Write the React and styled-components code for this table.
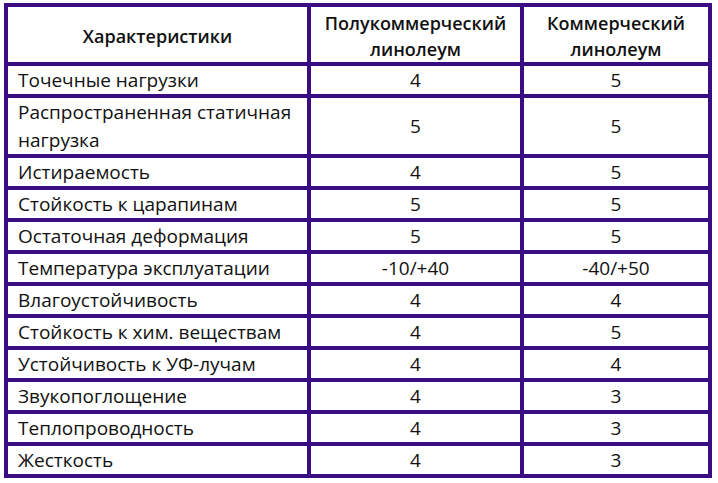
import React from 'react'
import styled, { createGlobalStyle } from 'styled-components'

const GlobalStyle = createGlobalStyle`
  html, body { margin: 0; padding: 0; background: #fff; }
  body { font-family: "Open Sans", "Liberation Sans", sans-serif; color: #111; }
`

const Page = styled.div`
  padding: 3px 6px 6px 4px;
`

const Grid = styled.div`
  display: grid;
  width: 708px;
  box-sizing: border-box;
  grid-template-columns: 299px 209px 184px;
  grid-template-rows: 55px 28px 56px repeat(10, 28px);
  gap: 4px;
  padding: 4px;
  background: #3b0b82;
`

const Cell = styled.div`
  background: #fff;
  display: flex;
  align-items: center;
  justify-content: ${p => (p.$left ? 'flex-start' : 'center')};
  text-align: ${p => (p.$left ? 'left' : 'center')};
  padding: ${p => (p.$left ? '0 4px 0 10px' : '0 4px')};
  font-size: ${p => (p.$head ? '18px' : '19px')};
  line-height: 28px;
  font-weight: ${p => (p.$head ? 600 : 400)};
  white-space: nowrap;
  ${p => p.$head && 'line-height: 26px; padding-top: 2px;'}
`

const rows = [
  ['Точечные нагрузки', '4', '5'],
  ['Распространенная статичная', '5', '5', 'нагрузка'],
  ['Истираемость', '4', '5'],
  ['Стойкость к царапинам', '5', '5'],
  ['Остаточная деформация', '5', '5'],
  ['Температура эксплуатации', '-10/+40', '-40/+50'],
  ['Влагоустойчивость', '4', '4'],
  ['Стойкость к хим. веществам', '4', '5'],
  ['Устойчивость к УФ-лучам', '4', '4'],
  ['Звукопоглощение', '4', '3'],
  ['Теплопроводность', '4', '3'],
  ['Жесткость', '4', '3'],
]

export default function App() {
  return (
    <>
      <GlobalStyle />
      <Page>
        <Grid>
          <Cell $head>Характеристики</Cell>
          <Cell $head>Полукоммерческий<br />линолеум</Cell>
          <Cell $head>Коммерческий<br />линолеум</Cell>
          {rows.map(r => (
            <React.Fragment key={r[0]}>
              <Cell $left>
                {r[3] ? <span>{r[0]}<br />{r[3]}</span> : r[0]}
              </Cell>
              <Cell>{r[1]}</Cell>
              <Cell>{r[2]}</Cell>
            </React.Fragment>
          ))}
        </Grid>
      </Page>
    </>
  )
}
